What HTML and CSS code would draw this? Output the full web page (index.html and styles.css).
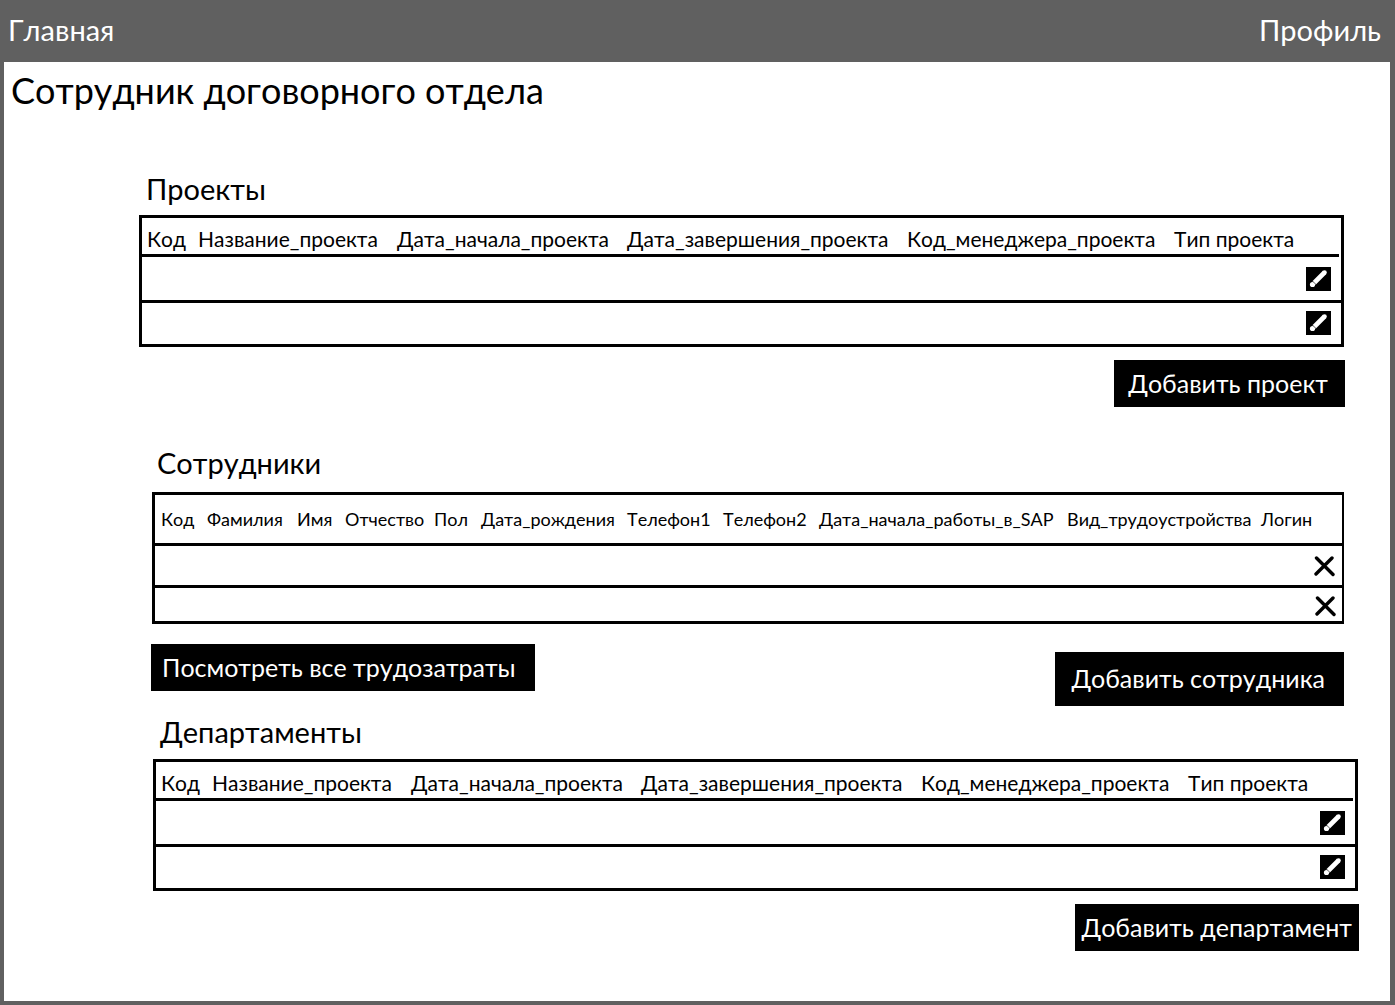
FILE: index.html
```html
<!DOCTYPE html>
<html lang="ru">
<head>
<meta charset="utf-8">
<title>Сотрудник договорного отдела</title>
<link rel="stylesheet" href="styles.css">
</head>
<body>
<svg class="sprite" aria-hidden="true">
  <symbol id="pencil" viewBox="0 0 25 24">
    <path d="M8 16L18.500 5.500" stroke="#fff" stroke-width="4.600"/>
    <circle cx="18.500" cy="5.500" r="2.300" fill="#fff"/>
    <circle cx="6.500" cy="17.500" r="2.600" fill="#fff"/>
    <path d="M6.500 14L10 17.500" stroke="#000" stroke-width=".6"/>
  </symbol>
  <symbol id="cross" viewBox="0 0 21 21">
    <path d="M2.500 2L19 18.500M18 2L2 18" stroke="#000" stroke-width="3.400" stroke-linecap="round"/>
  </symbol>
</svg>
<nav class="topbar">
  <a href="#">Главная</a>
  <a href="#">Профиль</a>
</nav>
<main class="page">
  <h1 class="page-title">Сотрудник договорного отдела</h1>

  <section class="block projects">
    <h2 class="block-title" id="projects-title">Проекты</h2>
    <table class="grid" aria-labelledby="projects-title">
      <colgroup><col class="w-code"><col class="w-name"><col class="w-start"><col class="w-end"><col class="w-manager"><col></colgroup>
      <thead>
        <tr><th>Код</th><th>Название_проекта</th><th>Дата_начала_проекта</th><th>Дата_завершения_проекта</th><th>Код_менеджера_проекта</th><th>Тип проекта</th></tr>
      </thead>
      <tbody>
        <tr><td></td><td></td><td></td><td></td><td></td><td class="action"><button class="icon-button edit" aria-label="Изменить"><svg width="25" height="24"><use href="#pencil"/></svg></button></td></tr>
        <tr><td></td><td></td><td></td><td></td><td></td><td class="action"><button class="icon-button edit" aria-label="Изменить"><svg width="25" height="24"><use href="#pencil"/></svg></button></td></tr>
      </tbody>
    </table>
    <div class="actions"><button class="button">Добавить проект</button></div>
  </section>

  <section class="block staff">
    <h2 class="block-title" id="staff-title">Сотрудники</h2>
    <table class="grid" aria-labelledby="staff-title">
      <colgroup><col class="s-code"><col class="s-surname"><col class="s-name"><col class="s-patronym"><col class="s-sex"><col class="s-birth"><col class="s-phone"><col class="s-phone"><col class="s-start"><col class="s-kind"><col></colgroup>
      <thead>
        <tr><th>Код</th><th>Фамилия</th><th>Имя</th><th>Отчество</th><th>Пол</th><th>Дата_рождения</th><th>Телефон1</th><th>Телефон2</th><th>Дата_начала_работы_в_SAP</th><th>Вид_трудоустройства</th><th>Логин</th></tr>
      </thead>
      <tbody>
        <tr><td colspan="10"></td><td class="action"><button class="icon-button" aria-label="Удалить"><svg width="21" height="21"><use href="#cross"/></svg></button></td></tr>
        <tr><td colspan="10"></td><td class="action"><button class="icon-button" aria-label="Удалить"><svg width="21" height="21"><use href="#cross"/></svg></button></td></tr>
      </tbody>
    </table>
    <div class="actions"><button class="button snug">Посмотреть все трудозатраты</button><button class="button tall">Добавить сотрудника</button></div>
  </section>

  <section class="block departments">
    <h2 class="block-title" id="departments-title">Департаменты</h2>
    <table class="grid" aria-labelledby="departments-title">
      <colgroup><col class="w-code"><col class="w-name"><col class="w-start"><col class="w-end"><col class="w-manager"><col></colgroup>
      <thead>
        <tr><th>Код</th><th>Название_проекта</th><th>Дата_начала_проекта</th><th>Дата_завершения_проекта</th><th>Код_менеджера_проекта</th><th>Тип проекта</th></tr>
      </thead>
      <tbody>
        <tr><td></td><td></td><td></td><td></td><td></td><td class="action"><button class="icon-button edit" aria-label="Изменить"><svg width="25" height="24"><use href="#pencil"/></svg></button></td></tr>
        <tr><td></td><td></td><td></td><td></td><td></td><td class="action"><button class="icon-button edit" aria-label="Изменить"><svg width="25" height="24"><use href="#pencil"/></svg></button></td></tr>
      </tbody>
    </table>
    <div class="actions"><button class="button compact">Добавить департамент</button></div>
  </section>
</main>
</body>
</html>
```
FILE: styles.css
```css
* { box-sizing: border-box; }

body {
  margin: 0;
  min-height: 100vh;
  display: flex;
  flex-direction: column;
  background: #606060;
  color: #000;
  font-family: Lato, "Open Sans", sans-serif;
  font-kerning: none;
}

.sprite { display: none; }

.topbar {
  display: flex;
  justify-content: space-between;
  align-items: center;
  height: 62px;
  padding: 0 14px 4px 8px;
  font-size: 29px;
}

.topbar a { color: #fff; text-decoration: none; }

.page {
  flex: 1;
  margin: 0 5px 4px 4px;
  padding-bottom: 50px;
  background: #fff;
}

.page-title {
  margin: 0 0 54px;
  padding-left: 7px;
  font-size: 36px;
  font-weight: 400;
  line-height: 56px;
}

.block-title {
  margin: 0 0 9px;
  padding-left: 7px;
  font-size: 29px;
  font-weight: 400;
  line-height: 34px;
}

.projects { margin: 0 46px 39px 135px; }
.staff { margin: 0 46px 9px 148px; }
.departments { margin: 0 32px 0 149px; }

.grid {
  width: 100%;
  table-layout: fixed;
  border: 3px solid #000;
  border-collapse: separate;
  border-spacing: 0;
}

.grid th {
  height: 39px;
  padding: 6px 0 0 5px;
  border-bottom: 3px solid #000;
  font-size: 21px;
  font-weight: 400;
  line-height: 28px;
  text-align: left;
  white-space: nowrap;
}

.grid td { height: 41px; padding: 0; }
.grid tbody tr:first-child td { height: 46px; border-bottom: 3px solid #000; }

.grid .action { padding-right: 10px; text-align: right; }
.grid tr:last-child .action { padding-bottom: 1px; }

/* The header rule stops just short of the right border. */
.projects th:last-child,
.departments th:last-child {
  padding-bottom: 3px;
  border-bottom: 0;
  background: linear-gradient(#000, #000) left bottom / calc(100% - 2px) 3px no-repeat;
}

.w-code { width: 51px; }
.w-name { width: 199px; }
.w-start { width: 230px; }
.w-end { width: 280px; }
.w-manager { width: 267px; }

.staff .block-title { padding-left: 5px; margin-bottom: 12px; }
.staff .grid { border-right-width: 2px; }
.staff th { height: 51px; padding: 0 0 0 6px; font-size: 18px; }
.staff td { height: 33px; }
.staff tbody tr:first-child td { height: 42px; }
.staff .grid .action { padding: 0 7px 0 0; }
.staff .grid tr:last-child .action { padding: 2px 6px 0 0; }

.s-code { width: 46px; }
.s-surname { width: 90px; }
.s-name { width: 48px; }
.s-patronym { width: 89px; }
.s-sex { width: 47px; }
.s-birth { width: 146px; }
.s-phone { width: 96px; }
.s-start { width: 248px; }
.s-kind { width: 194px; }

.icon-button {
  display: inline-block;
  padding: 0;
  border: 0;
  background: none;
  vertical-align: middle;
}

.icon-button svg { display: block; }
.edit { background: #000; }

.actions {
  display: flex;
  justify-content: flex-end;
  align-items: flex-start;
  margin-top: 13px;
}

.projects .actions, .departments .actions { margin-right: -1px; }
.departments .block-title { margin-bottom: 10px; }

.staff .actions {
  justify-content: space-between;
  margin: 20px 0 0 -1px;
}

.button {
  height: 47px;
  padding: 0 17px 2px 14px;
  border: 0;
  background: #000;
  color: #fff;
  font: inherit;
  font-kerning: none;
  font-size: 25px;
  white-space: nowrap;
}

.snug { padding: 0 19px 2px 11px; }
.tall { height: 54px; margin-top: 8px; padding: 0 19px 2px 16px; }
.compact { padding: 0 7px 2px; }
```
